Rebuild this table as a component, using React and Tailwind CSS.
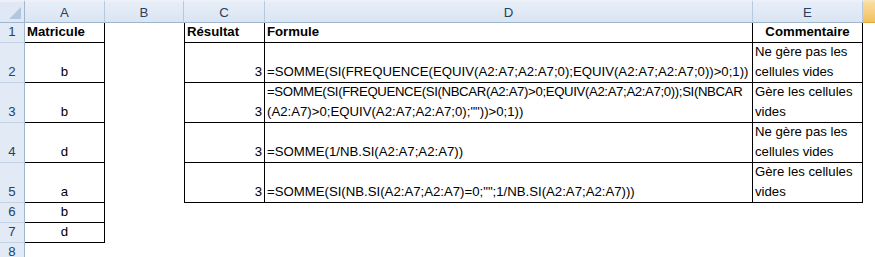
import React from "react";

const FONT = { fontFamily: "'Liberation Sans', Arial, sans-serif" };

function ColHdr({ children }) {
  return (
    <div className="flex items-center justify-center bg-gradient-to-b from-[#e6eef8] to-[#dbe5f2] border-t-2 border-t-[#edf1f7] border-b border-b-[#9eb6ce] border-r border-r-[#b7c9de] text-[#27415f] leading-none pt-[1px]">
      {children}
    </div>
  );
}

function RowHdr({ n }) {
  return (
    <div className="flex items-end justify-center bg-[#e2eaf5] border-r border-r-[#9eb6ce] border-b border-b-[#c3d3e6] text-[#27415f]">
      {n}
    </div>
  );
}

export default function App() {
  const rows = [
    {
      n: 2,
      a: "b",
      c: "3",
      d: ["=SOMME(SI(FREQUENCE(EQUIV(A2:A7;A2:A7;0);EQUIV(A2:A7;A2:A7;0))>0;1))"],
      tight: false,
      e: ["Ne gère pas les", "cellules vides"],
    },
    {
      n: 3,
      a: "b",
      c: "3",
      d: [
        "=SOMME(SI(FREQUENCE(SI(NBCAR(A2:A7)>0;EQUIV(A2:A7;A2:A7;0));SI(NBCAR",
        '(A2:A7)>0;EQUIV(A2:A7;A2:A7;0);""))>0;1))',
      ],
      tight: true,
      e: ["Gère les cellules", "vides"],
    },
    {
      n: 4,
      a: "d",
      c: "3",
      d: ["=SOMME(1/NB.SI(A2:A7;A2:A7))"],
      tight: false,
      e: ["Ne gère pas les", "cellules vides"],
    },
    {
      n: 5,
      a: "a",
      c: "3",
      d: ['=SOMME(SI(NB.SI(A2:A7;A2:A7)=0;"";1/NB.SI(A2:A7;A2:A7)))'],
      tight: false,
      e: ["Gère les cellules", "vides"],
    },
  ];

  return (
    <div
      className="w-[875px] h-[257px] overflow-hidden bg-white text-black"
      style={FONT}
    >
      <div className="grid grid-cols-[25px_80px_79px_81px_488px_110px_1fr] grid-rows-[23px_20px_40px_40px_40px_40px_20px_20px_20px] text-[13.2px] leading-[20px]">
        {/* Header row */}
        <div className="relative bg-[#dfe8f4] border-t-2 border-t-[#edf1f7] border-b border-b-[#9eb6ce] border-r border-r-[#9eb6ce]">
          <svg
            className="absolute right-[3px] bottom-[3px]"
            width="12"
            height="12"
            viewBox="0 0 12 12"
          >
            <polygon points="12,0 12,12 0,12" fill="#b4c6db" />
          </svg>
        </div>
        <ColHdr>A</ColHdr>
        <ColHdr>B</ColHdr>
        <ColHdr>C</ColHdr>
        <ColHdr>D</ColHdr>
        <ColHdr>E</ColHdr>
        <div className="bg-gradient-to-b from-[#fbdca0] to-[#f2c15c] border-t-2 border-t-[#f7e3b8] border-b border-b-[#e0a93e]" />

        {/* Row 1 */}
        <RowHdr n={1} />
        <div className="flex items-end px-[2px] font-bold border-r border-b border-black whitespace-nowrap">
          Matricule
        </div>
        <div />
        <div className="flex items-end px-[2px] font-bold border-l border-r border-b border-black whitespace-nowrap">
          Résultat
        </div>
        <div className="flex items-end px-[2px] font-bold border-r border-b border-black whitespace-nowrap">
          Formule
        </div>
        <div className="flex items-end justify-center px-[2px] font-bold border-r border-b border-black whitespace-nowrap">
          Commentaire
        </div>
        <div />

        {rows.map((r) => (
          <React.Fragment key={r.n}>
            <RowHdr n={r.n} />
            <div className="flex items-end justify-center px-[2px] border-r border-b border-black">
              {r.a}
            </div>
            <div />
            <div className="flex items-end justify-end px-[2px] border-l border-r border-b border-black">
              {r.c}
            </div>
            <div className="flex flex-col justify-end px-[2px] border-r border-b border-black whitespace-nowrap overflow-hidden">
              {r.d.map((l, i) => (
                <div
                  key={i}
                  className={r.tight && i === 0 ? "tracking-[-0.36px]" : ""}
                >
                  {l}
                </div>
              ))}
            </div>
            <div className="flex flex-col justify-end px-[2px] border-r border-b border-black whitespace-nowrap">
              {r.e.map((l, i) => (
                <div key={i}>{l}</div>
              ))}
            </div>
            <div />
          </React.Fragment>
        ))}

        {/* Row 6 */}
        <RowHdr n={6} />
        <div className="flex items-end justify-center px-[2px] border-r border-b border-black">b</div>
        <div />
        <div />
        <div />
        <div />
        <div />

        {/* Row 7 */}
        <RowHdr n={7} />
        <div className="flex items-end justify-center px-[2px] border-r border-b border-black">d</div>
        <div />
        <div />
        <div />
        <div />
        <div />

        {/* Row 8 */}
        <RowHdr n={8} />
        <div />
        <div />
        <div />
        <div />
        <div />
        <div />
      </div>
    </div>
  );
}
